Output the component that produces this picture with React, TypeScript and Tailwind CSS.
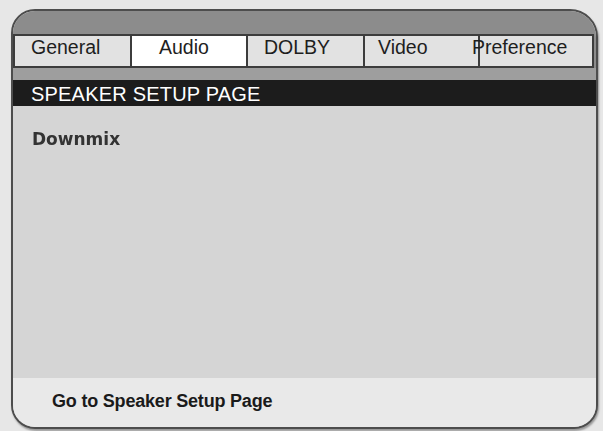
const tabs = [
  { label: 'General', pad: 'pl-[16px]', w: 'w-[119px]', active: false, shift: '' },
  { label: 'Audio', pad: 'pl-[27px]', w: 'w-[116px]', active: true, shift: '' },
  { label: 'DOLBY', pad: 'pl-[16px]', w: 'w-[117px]', active: false, shift: '' },
  { label: 'Video', pad: 'pl-[13px]', w: 'w-[115px]', active: false, shift: '' },
  { label: 'Preference', pad: 'pl-0', w: 'flex-1', active: false, shift: 'relative -left-[8px]' },
];

export default function App() {
  return (
    <div className="w-[603px] h-[431px] bg-[#e7e7e7] pl-[11px] pt-[9px] font-['Liberation_Sans',Arial,sans-serif] overflow-hidden">
      <div className="w-[587px] h-[420px] border-2 border-[#4d4d4d] rounded-[24px] rounded-tr-[28px] overflow-hidden flex flex-col bg-[#d5d5d5] shadow-[1px_2px_2px_rgba(0,0,0,0.35)]">
        <div className="h-[23px] bg-[#8c8c8c] shrink-0" />

        <div className="h-[34px] flex shrink-0 bg-[#8c8c8c] pr-[2px]">
          {tabs.map((t, i) => (
            <div
              key={t.label}
              className={`${t.w} h-full flex items-center pb-[6px] border-y-2 border-r-2 border-[#3c3c3c] ${i === 0 ? 'border-l-2' : ''} ${t.pad} ${t.active ? 'bg-white' : 'bg-[#e2e2e2]'}`}
            >
              <span className={`text-[19.5px] leading-none text-[#1e1e1e] whitespace-nowrap ${t.shift}`}>{t.label}</span>
            </div>
          ))}
        </div>

        <div className="h-[12px] bg-[#9e9e9e] shrink-0" />

        <div className="h-[26px] bg-[#1c1c1c] flex items-center pl-[18px] pt-[1px] shrink-0">
          <span className="text-[20px] leading-none text-white tracking-[0.2px]">SPEAKER SETUP PAGE</span>
        </div>

        <div className="h-[272px] bg-[#d5d5d5] pl-[19px] pt-[21px] shrink-0">
          <span className="font-['DejaVu_Sans',sans-serif] font-bold text-[17px] text-[#333333] blur-[0.5px]">Downmix</span>
        </div>

        <div className="flex-1 bg-[#e9e9e9] flex items-center pl-[39px] pb-[4px]">
          <span className="text-[18px] font-bold leading-none text-[#1a1a1a] tracking-[-0.2px]">Go to Speaker Setup Page</span>
        </div>
      </div>
    </div>
  );
}
